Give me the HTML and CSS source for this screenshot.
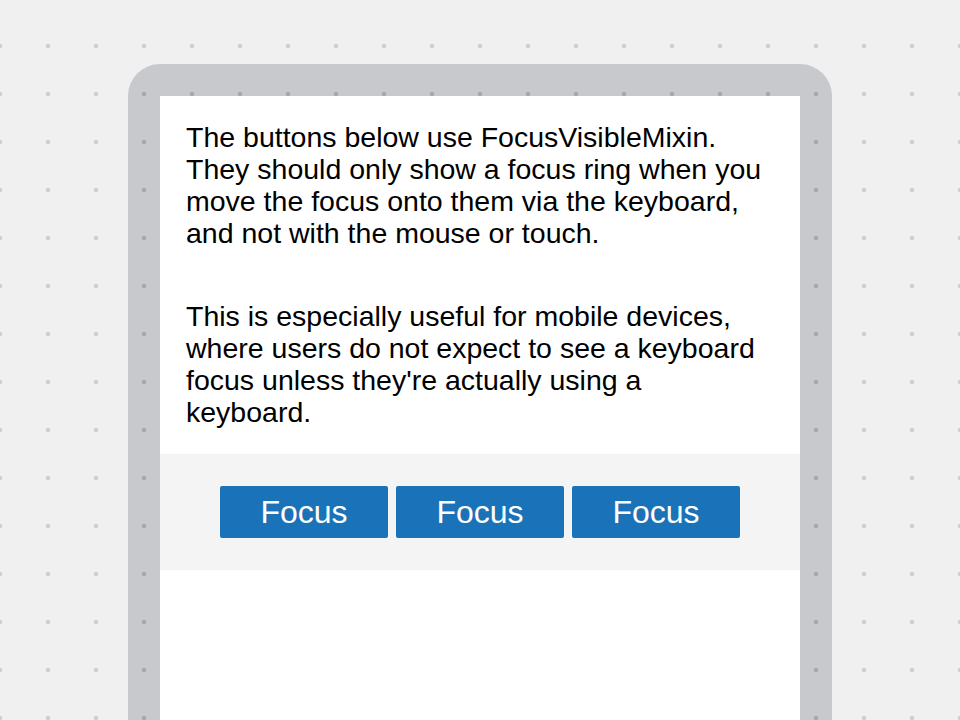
FILE: index.html
```html
<!DOCTYPE html>
<html>
<head>
<meta charset="utf-8">
<link rel="stylesheet" href="styles.css">
</head>
<body>
<div class="device">
  <div class="screen">
    <div class="copy">
      <p>The buttons below use FocusVisibleMixin. They should only show a focus ring when you move the focus onto them via the keyboard, and not with the mouse or touch.</p>
      <p>This is especially useful for mobile devices, where users do not expect to see a keyboard focus unless they're actually using a keyboard.</p>
    </div>
    <div class="actions">
      <button class="btn">Focus</button>
      <button class="btn">Focus</button>
      <button class="btn">Focus</button>
    </div>
  </div>
</div>
</body>
</html>
```
FILE: styles.css
```css
html, body {
  margin: 0;
  height: 100%;
  overflow: hidden;
}
body {
  background-color: #f0f0f0;
  background-image: radial-gradient(circle at 24px 24px, #cfcfcf 0, #cfcfcf 2px, rgba(207,207,207,0) 2.6px);
  background-size: 48px 48px;
  background-position: -24px 22px;
  background-attachment: fixed;
  font-family: "Liberation Sans", Arial, sans-serif;
}
.device {
  width: 640px;
  margin: 64px auto 0;
  padding: 32px 32px 0;
  border-radius: 32px 32px 0 0;
  background-color: #c8c9cc;
  background-image: radial-gradient(circle at 24px 24px, #a9aaae 0, #a9aaae 2px, rgba(169,170,174,0) 2.6px);
  background-size: 48px 48px;
  background-position: -24px 22px;
  background-attachment: fixed;
}
.screen {
  background: #fff;
  min-height: 660px;
}
.copy {
  padding: 25px 30px 26px 26px;
  color: #000;
  font-size: 28.5px;
  line-height: 32px;
}
.copy p {
  margin: 0;
}
.copy p + p {
  margin-top: 51px;
}
.actions {
  background: #f4f4f4;
  padding: 32px 0;
  display: flex;
  justify-content: center;
  gap: 8px;
}
.btn {
  width: 168px;
  height: 52px;
  border: 0;
  border-radius: 2px;
  background: #1a73b8;
  color: #fff;
  font-family: "Liberation Sans", Arial, sans-serif;
  font-size: 32px;
  padding: 0;
  line-height: 52px;
}
```
